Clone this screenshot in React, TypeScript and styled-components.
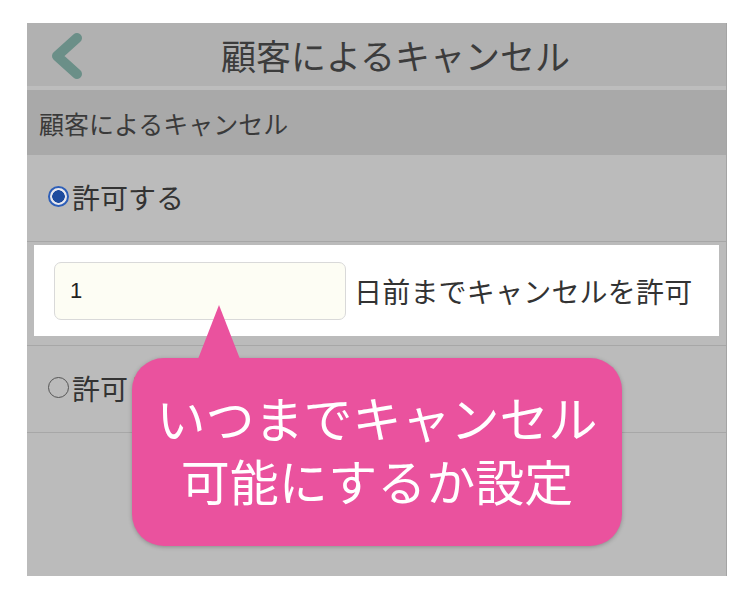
import styled, { createGlobalStyle } from "styled-components";

const GlobalStyle = createGlobalStyle`
  html, body {
    margin: 0;
    padding: 0;
    background: #ffffff;
  }
  body {
    font-family: "Noto Sans CJK JP", "Noto Sans", sans-serif;
  }
`;

const Page = styled.div`
  padding: 23px 0 0 27px;
`;

const Screen = styled.div`
  position: relative;
  width: 700px;
  height: 553px;
  background: #bbbbbb;
  border-right: 1px solid #a4a4a4;
  box-sizing: border-box;
  display: flex;
  flex-direction: column;
  overflow: hidden;
`;

const Header = styled.div`
  position: relative;
  height: 63px;
  background: #b1b1b1;
  border-bottom: 4px solid #bdbdbd;
  display: flex;
  align-items: center;
  justify-content: center;
  flex-shrink: 0;
`;

const BackButton = styled.div`
  position: absolute;
  left: 20px;
  top: 9px;
  width: 40px;
  height: 48px;
  svg {
    display: block;
  }
`;

const Title = styled.h1`
  margin: 0 0 0 38px;
  font-size: 35px;
  font-weight: 400;
  color: #3c3c3c;
`;

const SectionBar = styled.div`
  height: 65px;
  background: #a9a9a9;
  display: flex;
  align-items: center;
  padding-left: 12px;
  font-size: 25px;
  color: #3a3a3a;
  flex-shrink: 0;
`;

const OptionRow = styled.div`
  height: 87px;
  display: flex;
  align-items: center;
  padding: 0 0 3px 21px;
  box-sizing: border-box;
  font-size: 28px;
  color: #333333;
  border-bottom: 1px solid #a7a7a7;
  flex-shrink: 0;
`;

const Radio = styled.span<{ $checked?: boolean }>`
  width: 21px;
  height: 21px;
  border-radius: 50%;
  box-sizing: border-box;
  margin-right: 3px;
  flex-shrink: 0;
  border: ${(p) => (p.$checked ? "2px solid #2e5fb8" : "1.5px solid #555555")};
  background: ${(p) =>
    p.$checked
      ? "radial-gradient(circle, #1f4c9e 0 6px, #e8e8ee 6.5px)"
      : "transparent"};
`;

const DetailWrap = styled.div`
  padding: 3px 7px 9px;
  border-bottom: 1px solid #a7a7a7;
  flex-shrink: 0;
`;

const DetailBox = styled.div`
  background: #ffffff;
  height: 91px;
  display: flex;
  align-items: center;
  padding-left: 20px;
  gap: 8px;
`;

const DayInput = styled.div`
  width: 292px;
  height: 58px;
  box-sizing: border-box;
  border: 1px solid #d9d9d9;
  border-radius: 7px;
  background: #fdfdf4;
  display: flex;
  align-items: center;
  padding-left: 15px;
  font-family: "Liberation Sans", "Noto Sans", sans-serif;
  font-size: 22px;
  color: #222222;
`;

const DetailLabel = styled.span`
  font-size: 28px;
  color: #333333;
  letter-spacing: 0.2px;
`;

const Callout = styled.div`
  position: absolute;
  left: 105px;
  top: 335px;
  width: 490px;
  height: 188px;
  background: #ea529e;
  border-radius: 32px;
  box-shadow: 0 1px 4px rgba(0, 0, 0, 0.25);
  display: flex;
  flex-direction: column;
  align-items: center;
  justify-content: center;
  color: #ffffff;
  font-size: 49px;
  line-height: 63px;
  padding-bottom: 8px;
  box-sizing: border-box;

  &::before {
    content: "";
    position: absolute;
    left: 66px;
    top: -53px;
    border-left: 21px solid transparent;
    border-right: 21px solid transparent;
    border-bottom: 54px solid #ea529e;
  }
`;

const CalloutLine = styled.span`
  display: block;
  white-space: nowrap;
`;

const Chevron = () => (
  <svg width="40" height="48" viewBox="0 0 40 48">
    <path
      d="M30 6 L10 24 L30 42"
      fill="none"
      stroke="#6b8f88"
      strokeWidth="10"
      strokeLinecap="round"
      strokeLinejoin="round"
    />
  </svg>
);

export default function App() {
  return (
    <>
      <GlobalStyle />
      <Page>
        <Screen>
          <Header>
            <BackButton>
              <Chevron />
            </BackButton>
            <Title>顧客によるキャンセル</Title>
          </Header>
          <SectionBar>顧客によるキャンセル</SectionBar>
          <OptionRow>
            <Radio $checked />
            許可する
          </OptionRow>
          <DetailWrap>
            <DetailBox>
              <DayInput>1</DayInput>
              <DetailLabel>日前までキャンセルを許可</DetailLabel>
            </DetailBox>
          </DetailWrap>
          <OptionRow>
            <Radio />
            許可しない
          </OptionRow>
          <Callout>
            <CalloutLine>いつまでキャンセル</CalloutLine>
            <CalloutLine>可能にするか設定</CalloutLine>
          </Callout>
        </Screen>
      </Page>
    </>
  );
}
